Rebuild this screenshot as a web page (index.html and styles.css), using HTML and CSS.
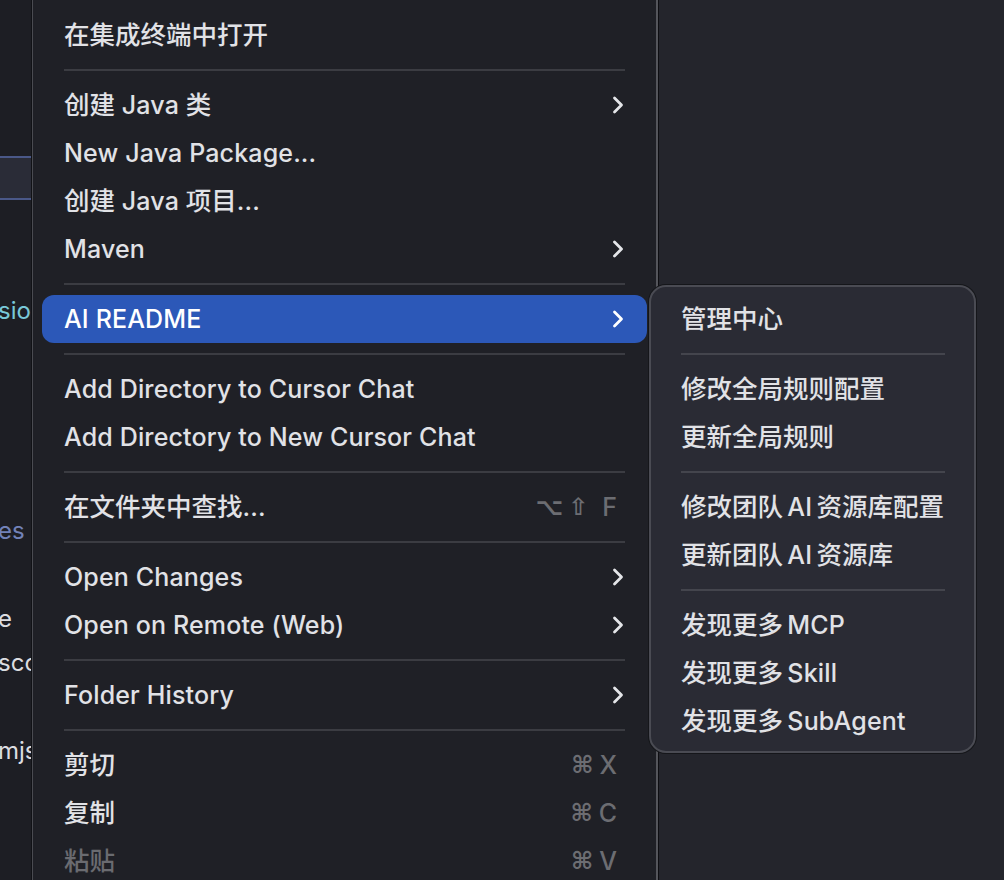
FILE: index.html
```html
<!DOCTYPE html>
<html lang="zh-CN">
<head>
<meta charset="utf-8">
<title>Context menu</title>
<link rel="stylesheet" href="styles.css">
</head>
<body>
<div class="screen">
  <aside class="tree">
    <div class="tree-row selected"></div>
    <div class="tree-row"></div>
    <div class="tree-row"></div>
    <div class="tree-row"><span class="label cyan">sions</span></div>
    <div class="tree-row"></div>
    <div class="tree-row"></div>
    <div class="tree-row"></div>
    <div class="tree-row"></div>
    <div class="tree-row"><span class="label muted">es</span></div>
    <div class="tree-row"></div>
    <div class="tree-row"><span class="label">e</span></div>
    <div class="tree-row"><span class="label">scovery</span></div>
    <div class="tree-row"></div>
    <div class="tree-row"><span class="label">mjs</span></div>
  </aside>

  <nav class="menu">
    <div class="item"><span class="text"><span class="zh">在集成终端中打开</span></span></div>
    <div class="sep"></div>
    <div class="item"><span class="text"><span class="zh">创建</span> Java <span class="zh">类</span></span><svg class="chev" viewBox="0 0 12 18"><path d="M2.5 2l7 7-7 7"/></svg></div>
    <div class="item"><span class="text">New Java Package...</span></div>
    <div class="item"><span class="text"><span class="zh">创建</span> Java <span class="zh">项目</span>...</span></div>
    <div class="item"><span class="text">Maven</span><svg class="chev" viewBox="0 0 12 18"><path d="M2.5 2l7 7-7 7"/></svg></div>
    <div class="sep"></div>
    <div class="item active"><span class="text">AI README</span><svg class="chev" viewBox="0 0 12 18"><path d="M2.5 2l7 7-7 7"/></svg></div>
    <div class="sep"></div>
    <div class="item"><span class="text">Add Directory to Cursor Chat</span></div>
    <div class="item"><span class="text">Add Directory to New Cursor Chat</span></div>
    <div class="sep"></div>
    <div class="item"><span class="text"><span class="zh">在文件夹中查找</span>...</span><span class="keys"><span class="mod">⌥⇧</span><span class="key wide">F</span></span></div>
    <div class="sep"></div>
    <div class="item"><span class="text">Open Changes</span><svg class="chev" viewBox="0 0 12 18"><path d="M2.5 2l7 7-7 7"/></svg></div>
    <div class="item"><span class="text">Open on Remote (Web)</span><svg class="chev" viewBox="0 0 12 18"><path d="M2.5 2l7 7-7 7"/></svg></div>
    <div class="sep"></div>
    <div class="item"><span class="text">Folder History</span><svg class="chev" viewBox="0 0 12 18"><path d="M2.5 2l7 7-7 7"/></svg></div>
    <div class="sep"></div>
    <div class="item"><span class="text"><span class="zh">剪切</span></span><span class="keys"><span class="mod">⌘</span><span class="key">X</span></span></div>
    <div class="item"><span class="text"><span class="zh">复制</span></span><span class="keys"><span class="mod">⌘</span><span class="key">C</span></span></div>
    <div class="item disabled"><span class="text"><span class="zh">粘贴</span></span><span class="keys"><span class="mod">⌘</span><span class="key">V</span></span></div>
  </nav>

  <div class="backdrop"></div>

  <div class="submenu">
    <div class="item"><span class="text"><span class="zh">管理中心</span></span></div>
    <div class="sep"></div>
    <div class="item"><span class="text"><span class="zh">修改全局规则配置</span></span></div>
    <div class="item"><span class="text"><span class="zh">更新全局规则</span></span></div>
    <div class="sep"></div>
    <div class="item"><span class="text"><span class="zh">修改团队</span> AI <span class="zh">资源库配置</span></span></div>
    <div class="item"><span class="text"><span class="zh">更新团队</span> AI <span class="zh">资源库</span></span></div>
    <div class="sep"></div>
    <div class="item"><span class="text"><span class="zh">发现更多</span> MCP</span></div>
    <div class="item"><span class="text"><span class="zh">发现更多</span> Skill</span></div>
    <div class="item"><span class="text"><span class="zh">发现更多</span> SubAgent</span></div>
  </div>
</div>
</body>
</html>
```

FILE: styles.css
```css
* {
  box-sizing: border-box;
}

html, body {
  margin: 0;
  padding: 0;
  background: #24252c;
}

body {
  font-family: "Inter", "Noto Sans CJK SC", sans-serif;
  font-size: 25px;
  font-weight: 500;
  letter-spacing: 0.15px;
  color: #e1e2e6;
}

.screen {
  position: relative;
  width: 1004px;
  height: 880px;
  overflow: hidden;
  display: flex;
}

/* project tree peeking out on the left, under the menu */
.tree {
  width: 32px;
  flex: none;
  overflow: hidden;
  background: #1d1e24;
  padding-top: 156px;
  display: flex;
  flex-direction: column;
}

.tree-row {
  height: 44px;
  flex: none;
  display: flex;
  align-items: center;
  white-space: nowrap;
  color: #dcdde1;
  font-weight: 400;
  font-size: 24px;
  letter-spacing: 0;
}

.tree-row .label {
  margin-left: -2px;
}

.tree-row.selected {
  background: #2a2c37;
  border-top: 2px solid #4a5888;
  border-bottom: 2px solid #4a5888;
}

.label.cyan {
  color: #79c8d8;
}

.label.muted {
  color: #7282b8;
}

/* main context menu */
.menu {
  width: 626px;
  flex: none;
  background: #1f2026;
  border-left: 1px solid #4a4b51;
  border-right: 2px solid #54555b;
  box-shadow: 1px 0 0 #0c0c0f, -1px 0 0 #111216;
  padding: 11px 9px 0 9px;
  display: flex;
  flex-direction: column;
}

.item {
  height: 48px;
  flex: none;
  display: flex;
  align-items: center;
  justify-content: space-between;
  padding: 0 22px;
  border-radius: 12px;
  white-space: nowrap;
}

.text {
  line-height: normal;
}

/* ideographs: slightly larger, kept out of the line-box height */
.zh {
  font-size: 25.5px;
  line-height: 0;
  letter-spacing: 0;
}

.item.active {
  background: #2c58b8;
  color: #ffffff;
}

.item.disabled {
  color: #6a6b70;
}

.chev {
  width: 12px;
  height: 18px;
  margin-right: 1px;
  fill: none;
  stroke: #e4e5e9;
  stroke-width: 2.8;
  stroke-linecap: round;
  stroke-linejoin: round;
}

.active .chev {
  stroke: #ffffff;
}

.keys {
  display: flex;
  align-items: center;
  color: #6c6d72;
  margin-right: 8px;
}

.mod {
  font-family: "DejaVu Sans", sans-serif;
  font-size: 24px;
  font-weight: 700;
  letter-spacing: 5px;
}

.key {
  font-size: 25px;
  letter-spacing: 0;
  margin-left: 1px;
}

.key.wide {
  margin-left: 9px;
}

.sep {
  height: 22px;
  flex: none;
  margin: 0 22px;
  display: flex;
  align-items: center;
}

.sep::before {
  content: "";
  display: block;
  width: 100%;
  height: 2px;
  background: #3b3c42;
}

.backdrop {
  flex: 1;
  background: #24252c;
  border-left: 1px solid #0e0e12;
}

/* AI README submenu */
.submenu {
  position: absolute;
  left: 649px;
  top: 285px;
  width: 327px;
  height: 468px;
  background: #2a2b34;
  border: 2px solid #4a4b53;
  border-radius: 17px;
  box-shadow: 0 0 0 1px #15161a;
  padding: 8px 0 0 0;
  display: flex;
  flex-direction: column;
  word-spacing: -2.5px;
}

.submenu .item {
  padding: 0 30px;
  justify-content: flex-start;
}

.submenu .sep {
  margin: 0 29px 0 30px;
}

.submenu .sep::before {
  background: #44454d;
}
```
